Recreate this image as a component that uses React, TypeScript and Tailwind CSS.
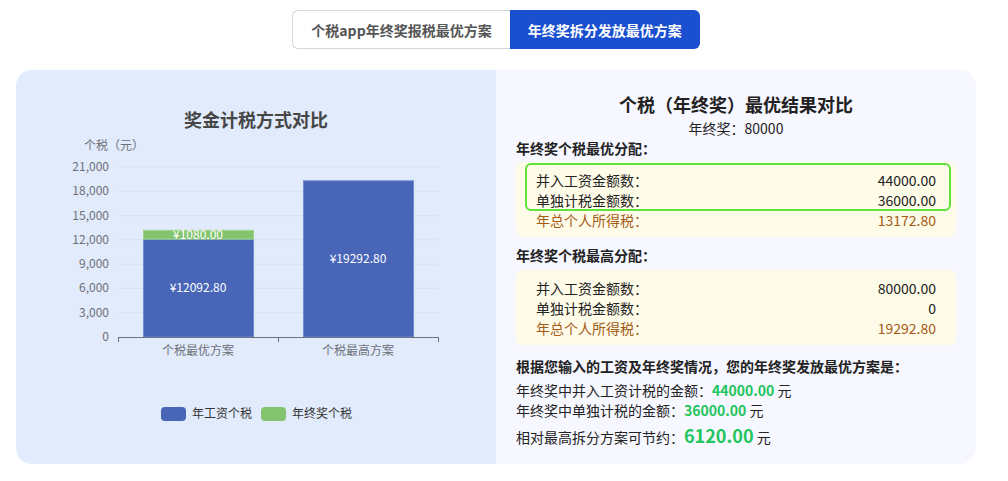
import React from 'react';

const FONT = '"Noto Sans CJK SC", "Noto Sans", sans-serif';

const MAX = 21000;
const Y0 = 267;
const H = 170;
const yOf = (v: number) => Y0 - (v / MAX) * H;

const ticks = [0, 3000, 6000, 9000, 12000, 15000, 18000, 21000];

const TaxChart: React.FC = () => {
  const salaryA = 12092.8;
  const bonusA = 1080;
  const salaryB = 19292.8;
  return (
    <svg width="480" height="394" viewBox="0 0 480 394" style={{ fontFamily: FONT }}>
      <text x="240" y="57" textAnchor="middle" fontSize="18" fontWeight="700" fill="#464646">奖金计税方式对比</text>
      <text x="98" y="80" textAnchor="middle" fontSize="12" fill="#6e7079">个税（元）</text>
      {ticks.map(t => (
        <g key={t}>
          {t > 0 && <line x1="102" x2="422" y1={yOf(t)} y2={yOf(t)} stroke="#d9e0ee" strokeWidth="1" />}
          <text x="93" y={yOf(t) + 4} textAnchor="end" fontSize="12" fill="#6e7079">{t.toLocaleString('en-US')}</text>
        </g>
      ))}
      {/* bar 1 */}
      <rect x="127.5" y={yOf(salaryA)} width="110" height={yOf(0) - yOf(salaryA)} fill="#4865b8" stroke="#6f8bd6" strokeWidth="1" />
      <rect x="127.5" y={yOf(salaryA + bonusA)} width="110" height={yOf(salaryA) - yOf(salaryA + bonusA)} fill="#85c46e" stroke="#9fd68c" strokeWidth="1" />
      <text x="182" y={(yOf(0) + yOf(salaryA)) / 2 + 4} textAnchor="middle" fontSize="12" fill="#fff">¥12092.80</text>
      <text x="182" y={yOf(salaryA + bonusA / 2) + 4} textAnchor="middle" fontSize="12" fill="#fff">¥1080.00</text>
      {/* bar 2 */}
      <rect x="287.5" y={yOf(salaryB)} width="110" height={yOf(0) - yOf(salaryB)} fill="#4865b8" stroke="#6f8bd6" strokeWidth="1" />
      <text x="342" y={(yOf(0) + yOf(salaryB)) / 2 + 4} textAnchor="middle" fontSize="12" fill="#fff">¥19292.80</text>
      {/* x axis */}
      <line x1="102" x2="422" y1="267.5" y2="267.5" stroke="#6e7079" strokeWidth="1" />
      {[102, 262, 422].map(x => (
        <line key={x} x1={x + 0.5} x2={x + 0.5} y1="267" y2="272" stroke="#6e7079" strokeWidth="1" />
      ))}
      <text x="182" y="285" textAnchor="middle" fontSize="12" fill="#6e7079">个税最优方案</text>
      <text x="342" y="285" textAnchor="middle" fontSize="12" fill="#6e7079">个税最高方案</text>
      {/* legend */}
      <rect x="145" y="337" width="25" height="14" rx="4" fill="#4865b8" />
      <text x="176" y="348" fontSize="12" fill="#333">年工资个税</text>
      <rect x="245" y="337" width="25" height="14" rx="4" fill="#85c46e" />
      <text x="276" y="348" fontSize="12" fill="#333">年终奖个税</text>
    </svg>
  );
};

const Row: React.FC<{ label: string; value: string; brown?: boolean }> = ({ label, value, brown }) => (
  <div className={`flex justify-between leading-5 text-sm ${brown ? 'text-[#a45a17]' : 'text-[#222]'}`}>
    <span>{label}</span>
    <span>{value}</span>
  </div>
);

const App: React.FC = () => {
  return (
    <div className="w-[992px] h-[481px] bg-white" style={{ fontFamily: FONT }}>
      <div className="flex justify-center pt-[10px]">
        <button className="h-[39px] px-[18px] text-sm font-semibold text-[#555] bg-white border border-[#d5d5e0] border-r-0 rounded-l-md">
          个税app年终奖报税最优方案
        </button>
        <button className="h-[39px] px-[18px] text-sm font-semibold text-white bg-[#1a4fd0] rounded-r-md">
          年终奖拆分发放最优方案
        </button>
      </div>

      <div className="ml-4 w-[960px] mt-[21px] grid grid-cols-2 h-[394px] rounded-2xl overflow-hidden">
        <div className="bg-[#e1ebfc]">
          <TaxChart />
        </div>

        <div className="bg-[#f6f7ff] px-5 pt-5">
          <h2 className="text-center text-lg leading-7 font-bold text-[#222]">个税（年终奖）最优结果对比</h2>
          <div className="text-center text-sm leading-5 text-[#222]">年终奖：80000</div>

          <div className="text-sm leading-5 font-semibold text-[#222]">年终奖个税最优分配：</div>
          <div className="relative mt-1 bg-[#fefbe8] rounded-md px-5 pt-2 pb-[7px]">
            <div className="absolute left-[9px] right-[5px] top-[1px] h-[48px] border-2 border-[#5ee33a] rounded-md" />
            <Row label="并入工资金额数：" value="44000.00" />
            <Row label="单独计税金额数：" value="36000.00" />
            <Row label="年总个人所得税：" value="13172.80" brown />
          </div>

          <div className="mt-2 text-sm leading-5 font-semibold text-[#222]">年终奖个税最高分配：</div>
          <div className="mt-[5px] bg-[#fefbe8] rounded-md px-5 pt-2 pb-[7px]">
            <Row label="并入工资金额数：" value="80000.00" />
            <Row label="单独计税金额数：" value="0" />
            <Row label="年总个人所得税：" value="19292.80" brown />
          </div>

          <div className="mt-[11px] text-sm leading-5 font-semibold text-[#222]">根据您输入的工资及年终奖情况，您的年终奖发放最优方案是：</div>
          <div className="mt-1 text-sm leading-5 text-[#222]">
            年终奖中并入工资计税的金额：<span className="font-bold text-[#22c55e]">44000.00</span> 元
          </div>
          <div className="text-sm leading-5 text-[#222]">
            年终奖中单独计税的金额：<span className="font-bold text-[#22c55e]">36000.00</span> 元
          </div>
          <div className="text-sm leading-6 text-[#222] mt-[1px]">
            相对最高拆分方案可节约：<span className="text-lg font-bold text-[#22c55e]">6120.00</span> 元
          </div>
        </div>
      </div>
    </div>
  );
};

export default App;
